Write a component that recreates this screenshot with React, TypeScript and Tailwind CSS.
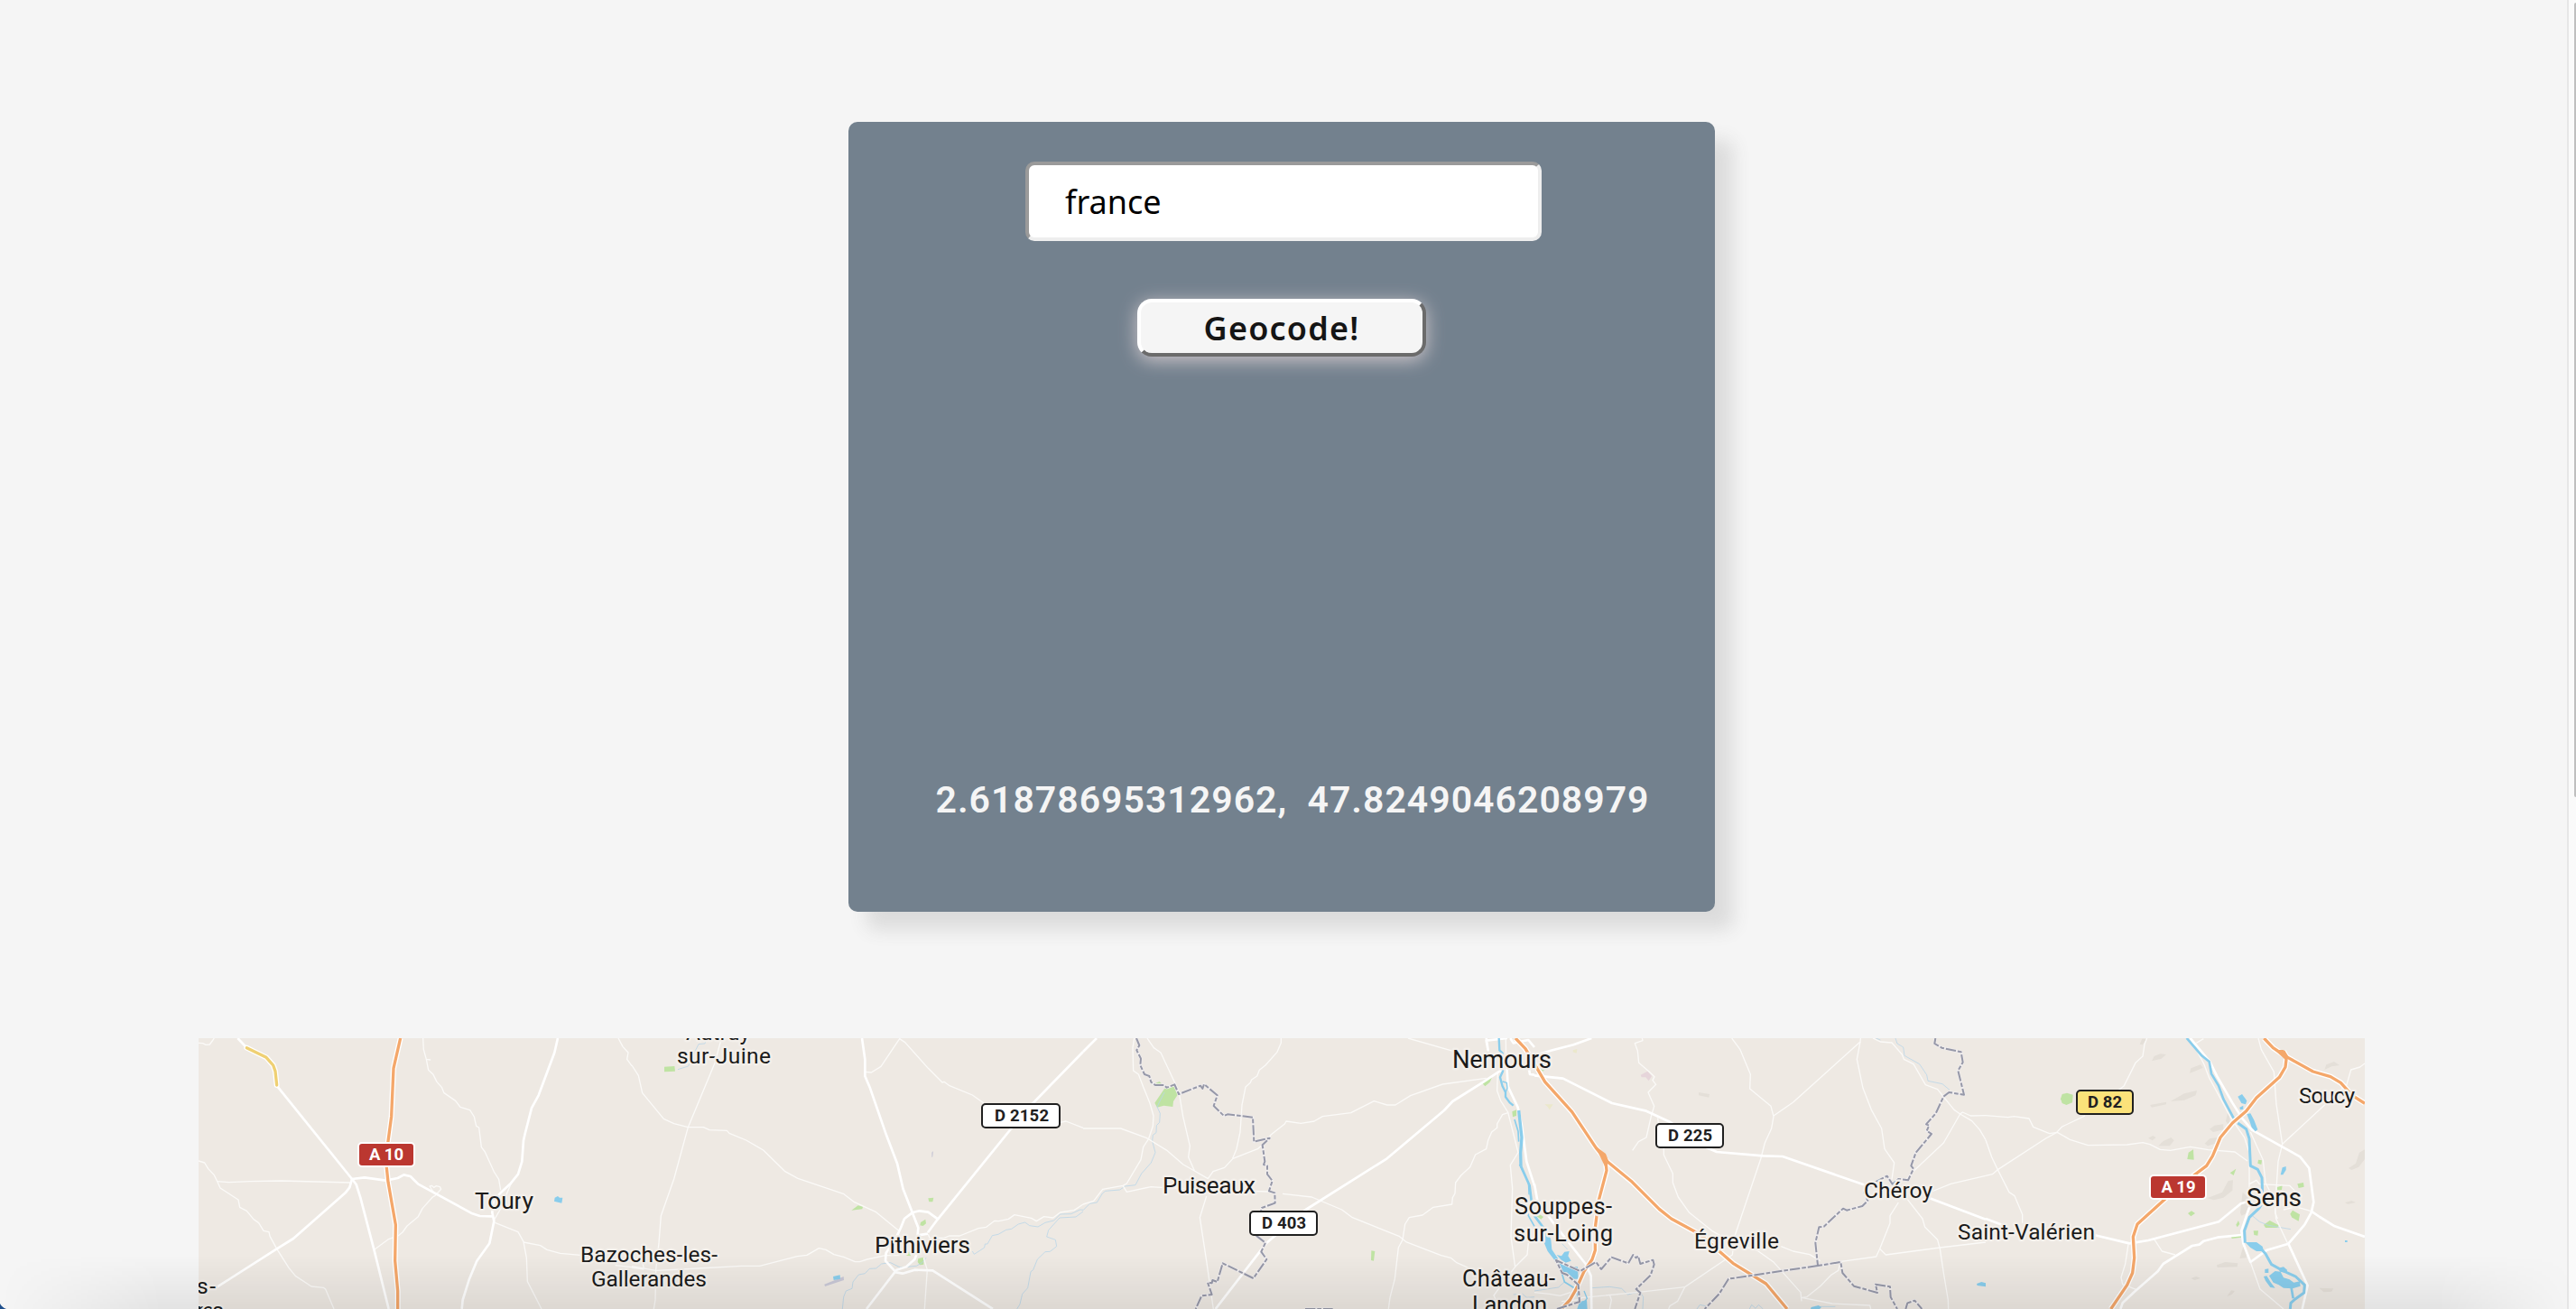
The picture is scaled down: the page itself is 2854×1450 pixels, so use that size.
type Tile = {
  x: number;
  relief?: string[];
  green?: string[];
  lake?: string[];
  thin?: string[];
  stream?: string[];
  major?: string[];
  river?: [string, number][];
  motorway?: string[];
  border?: string[];
};

/* Each tile covers 500x320 map pixels, its geometry is stored at three times that scale. */
const tiles: Tile[] = [
  {
    x: 200,
    lake: ['1244,590 1254,585 1260,590 1270,590 1267,608 1254,605 1242,602'],
    thin: [
      '60,76 74,77 84,82 97,81 112,60',
      '60,468 80,474 92,494 112,515 123,538 132,558 192,597 197,622 220,634 243,662 260,674 276,700 294,704 297,718 320,760 360,823 382,850 435,885 475,889 482,894 510,960',
      '123,536 160,539 230,536 335,534 450,537 565,540',
      '806,60 808,98 817,130 830,132 817,130 824,166 840,181 852,205 868,223 876,242 914,268 930,289 962,299 976,321 983,352 992,357 1000,422 1012,438 1042,504 1058,529 1064,565',
      '1455,60 1470,88 1488,108 1484,130 1500,152',
      '845,578 828,552 835,550 842,556 850,551 862,554 866,562 845,584 838,588 804,626 790,653 753,684 738,705 724,716 690,729 642,764',
      '1100,540 1085,575 1080,600 1040,668',
      '1045,673 1122,704 1140,736 1150,790 1153,868 1200,960',
      '1140,738 1196,749 1218,763 1262,775 1330,781',
      '1445,815 1500,821',
    ],
    major: [
      '190,60 220,92',
      '320,218 570,528 584,546 598,590 645,770 692,960',
      '570,528 562,556 548,574 375,726 320,760 120,888',
      '570,528 612,523 682,533 722,525 742,514 764,519 790,545 970,643 995,651 1035,652',
      '1254,60 1243,108 1190,250 1167,292 1145,378 1140,400 1135,470 1122,512 1098,542 1064,574 1040,600 1036,640 1042,668 1027,742 985,800 960,860 938,930 935,960',
    ],
    motorway: ['731,60 708,160 701,320 682,462 690,538 715,680 713,800 722,900 722,960'],
  },
  {
    x: 700,
    green: [
      '108,155 142,153 144,170 108,172',
      '730,632 752,616 768,620 766,628',
      '958,682 960,672 976,662 978,676 968,684',
      '985,592 1003,590 1000,604 988,604',
      '908,774 928,768 926,784 912,782',
      '952,792 970,788 970,812 958,814 950,804',
    ],
    lake: ['669,852 692,847 693,860 671,864'],
    thin: [
      '0,150 22,184 35,242 106,328 140,344 187,356 238,356 258,365 316,367 324,376 380,399 437,432 508,502 552,526 705,578 740,605 812,638 890,702',
      '298,60 275,145 187,356 140,528 97,650 90,740 80,830 78,930 73,960',
      '0,818 80,832 220,825 365,817 425,817 550,785 582,781 622,758 645,763 672,779 704,787 742,803 758,803 782,795 843,782 890,782',
      '0,822 40,828',
      '35,800 40,826',
      '776,172 796,174 828,154 890,62 908,74 985,160 1032,207 1038,205 1056,218 1132,249 1170,276',
      '890,62 891,60',
      '1425,340 1443,336 1500,358',
      '985,712 990,724 1038,724 1055,717 1090,717 1152,692 1178,688 1206,667 1220,668 1252,661 1272,647 1328,658 1345,668 1370,653 1400,657 1424,639 1470,632 1500,612',
      '970,790 982,830 973,960',
    ],
    stream: [
      '153,164 188,153 198,128 222,80 243,78 245,72',
      '1132,768 1138,778 1172,756 1174,744 1182,744 1198,716 1218,712 1244,697 1262,694 1285,678 1307,672 1322,683 1350,687 1374,673 1403,666 1424,645 1460,644 1490,630 1500,631',
      '1500,636 1476,654 1422,657 1403,678 1385,698 1379,720 1408,730 1412,752 1390,769 1374,770 1348,795 1334,830 1326,836 1316,890 1298,910 1290,944 1280,960',
      '700,960 704,920 712,900 732,892 735,870 754,846 775,842 790,826 812,825 830,810 860,806 892,822 946,817 965,806 978,790',
    ],
    major: [
      '765,60 775,130 775,186 792,226 846,382 882,476 902,562 932,638 952,690 950,715 984,710',
      '1500,105 1310,300 1015,664 984,706',
      '1018,662 985,638 956,634 932,640 906,660 894,690 878,724 845,774 843,800 878,838 900,842 940,830 1000,832 1200,960',
      '950,770 940,795 912,820 880,830 780,960',
    ],
  },
  {
    x: 1200,
    green: [
      '238,275 262,240 270,228 300,218 316,245 300,270 298,288 268,284 246,290',
      '240,210 254,204 262,212 250,220',
      '1324,206 1362,184 1352,206 1336,220',
      '1426,304 1440,298 1440,318 1428,322',
      '958,766 970,768 966,800 957,798',
    ],
    thin: [
      '170,60 165,92 167,168 184,180 200,222 222,276 234,318 232,352 218,394 200,422 192,464 145,543 132,550 65,562 35,601 0,612',
      '0,360 125,360 210,391 280,434 333,480 370,501 415,527 432,503 470,490 498,460 580,428 608,404 625,380 670,345 675,336 724,343 768,336 796,320 890,308 967,269 1010,282 1038,282 1088,251 1195,213 1340,193',
      '213,60 235,92 258,108 318,236 332,320 355,418 350,455 370,500',
      '658,60 658,76 645,106 606,150 586,166 578,186 560,198 556,208 540,222 528,282 522,372 510,428 497,460',
      '132,550 145,571 225,554 270,557 560,568 618,570',
      '663,577 760,588 860,630 895,656 1050,718 1075,738 1190,782 1222,790 1240,805 1285,825',
      '410,585 388,656 410,800 433,960',
      '1412,308 1394,314 1376,345 1376,358 1358,372 1346,400 1340,428 1304,447 1286,488 1256,516 1238,540 1236,576 1228,590 1226,612 1164,622 1128,648 1084,656 1070,678 1062,730 1048,756 1036,860 1020,922 1015,960',
      '1080,60 1230,103',
      '1378,175 1376,235 1388,268 1412,306 1446,440 1420,482 1427,560 1422,720 1436,820 1476,780 1480,740',
      '1436,820 1405,860 1365,915 1372,930',
      '1405,60 1406,160',
    ],
    stream: [
      '270,240 246,288 256,310 254,340 244,350 243,374 232,382 230,402 240,440 226,474 194,510 174,548 140,552 122,564 74,568 64,576 46,606 22,610 0,632',
      '1430,912 1460,910 1475,922 1500,920',
    ],
    major: [
      '45,60 0,105',
      '1400,160 1375,176 1330,206 1228,270 1200,300 1010,460 740,630 610,740 440,960',
      '1408,150 1412,220 1445,290 1458,350 1474,470 1500,550',
      '1340,60 1346,100 1340,68 1410,60',
      '1420,60 1430,76 1480,66 1500,90',
      '1480,150 1485,180 1500,182',
    ],
    river: [
      ['1382,60 1384,100 1394,110 1395,170 1386,190 1394,220 1404,240 1404,255 1418,274 1430,284', 7],
      ['1394,204 1408,208 1410,226 1404,242', 4],
      ['1434,330 1446,370 1448,404', 5],
      ['1448,300 1458,390 1454,440 1455,485', 10],
      ['1455,485 1484,550 1490,600', 8],
      ['1450,480 1480,540 1482,580', 4],
      ['1478,620 1480,650 1500,685', 5],
    ],
    motorway: ['1437,60 1470,95 1500,145'],
    border: [
      '177,60 187,84 178,100 192,128 190,150 204,180 220,186 226,206 240,216 268,216 278,224 304,214 318,246 390,218 397,228 402,213 446,250 434,285 468,318 480,313 564,323 568,404 620,392 596,415 604,470 600,480 612,484 612,512 629,534 618,568 637,574 638,608 594,624 590,640',
      '575,716 606,740 592,770 610,795 566,858 464,808 446,870 430,864 428,874 414,872 428,912 394,916 374,960',
      '738,960 830,960',
    ],
  },
  {
    x: 1700,
    relief: ['546,240 582,246 580,257 546,250'],
    green: [
      '10,640 30,654 22,662 8,652',
      '28,704 46,716 40,724 26,720',
      '14,158 36,164 28,170',
    ],
    lake: [
      '24,690 40,694 55,730 58,762 78,792 70,802 44,768 28,730',
      '74,780 90,784 100,770 116,768 112,784 122,800 104,806 88,796',
      '80,800 106,820 144,820 146,860 130,860 108,838 94,836',
      '150,936 174,930 176,960 142,960',
      '1470,876 1486,870 1500,874 1500,886 1472,882',
      '920,954 944,948 954,954 948,960 918,960',
    ],
    thin: [
      '358,60 360,68 334,77 343,102 347,142 382,172 399,188 393,200 404,214 378,240 398,286 388,320 372,390 346,404 326,433',
      '410,325 412,345',
      '430,420 430,448 460,510 460,540 478,588 515,640 590,700 660,740 740,765 796,805 885,905 888,934',
      '656,60 684,98 718,180 716,228 786,286 795,320 788,360 766,408 752,462 665,720 658,780 500,887 476,934 450,950 446,960',
      '795,318 860,273 1083,72 1084,60',
      '1083,72 1072,130 1092,226 1120,298 1154,360 1164,428 1196,474 1188,530',
      '1125,60 1150,72 1188,75 1222,114 1228,130 1260,146 1300,215 1340,230 1360,255 1395,298 1415,312 1454,335 1480,364 1500,398',
      '1415,312 1423,306 1450,318 1500,317',
      '1415,312 1360,408 1262,500 1235,530',
      '1320,570 1384,544 1500,517',
      '1240,596 1290,660 1298,688 1340,730 1348,760 1360,840 1375,930 1376,960',
      '1210,606 1182,650 1182,675 1148,760 1136,786 1020,802',
      '1148,760 1168,780 1348,756 1500,738',
      '820,752 860,768 915,779 950,800',
      '1018,802 1010,832 985,848 950,884 905,920 888,922 990,942 1115,948 1118,960',
      '500,887 340,905 160,922 140,930 90,935',
      '0,905 50,910 85,916 120,905',
      '250,912 256,930 250,960',
    ],
    stream: [
      '1135,60 1150,66',
      '1200,60 1206,78 1226,90 1230,118 1280,146 1304,182 1308,202 1356,212 1380,232',
      '0,900 80,888 100,870',
      '190,890 250,886 290,892 310,912 350,902 362,920 360,960',
      '540,960 550,946 570,950 580,944',
      '715,960 722,946 735,958 745,946 760,960',
      '950,952 1000,952',
      '72,722 110,762',
    ],
    major: [
      '0,118 60,100 130,82 190,60',
      '0,184 95,194 258,276 372,302 450,338 570,422 606,438 760,451 825,453 1110,552',
      '1310,590 1500,662',
      '0,545 10,600 60,670 170,810 188,850 190,960',
    ],
    river: [
      ['0,650 30,690', 8],
      ['70,798 110,822 150,832', 8],
      ['88,830 100,870 135,892 150,930', 5],
      ['165,900 175,925 150,955', 4],
    ],
    motorway: [
      '0,145 35,205 125,305 205,425 240,468 325,538 415,628 455,660 550,712 660,808 770,876 840,960',
      '236,460 240,500 214,598 202,690 202,765 192,795 165,835 138,895 118,930 90,960',
    ],
    border: [
      '1333,60 1330,78 1354,92 1418,106 1424,140 1408,168 1428,248 1378,240 1360,254 1334,310 1302,346 1312,350 1304,368 1320,378 1268,440 1252,484 1260,494 1242,532 1210,528 1190,545 1172,518 1130,540 1095,572 1108,600 1090,618 1038,632 1026,626 962,686 946,688 934,740 942,816 1018,804 1024,840 1062,884 1140,906 1134,878 1182,886 1184,920 1206,960',
      '942,816 645,860 614,910 566,960',
      '1234,960 1240,940 1264,932 1288,960',
      '75,960 150,936 146,880 108,846 92,840 72,798 152,834 205,804 222,828 256,788 312,808 328,780 338,790 345,784 352,810 394,797 398,812 386,848 338,894 352,906 334,960',
    ],
  },
  {
    x: 2200,
    relief: [
      '512,80 520,62 534,62 522,82',
      '552,136 560,120 580,112 600,114 584,128',
      '678,176 682,160 714,148 722,158 700,168',
      '614,270 660,244 702,234 698,250 660,266',
      '546,282 600,272 600,280 552,290',
      '1126,165 1132,148 1158,138 1176,150 1150,154',
      '574,418 590,402 616,390 626,400 612,418',
      '540,392 556,384 566,390 554,400',
      '744,362 760,350 790,346 790,364 756,372',
      '728,410 744,394 770,390 764,410 738,418',
      '1206,492 1230,476 1242,440 1260,430 1260,462 1240,488 1216,498',
      '736,592 786,572 806,534 822,532 820,566 790,590 758,598',
      '1194,606 1216,600 1230,606 1204,612',
      '846,640 854,572 874,590 872,640 850,650',
      '768,814 796,804 838,808 836,820 770,822',
      '682,858 700,852 714,858 694,864',
      '802,918 816,898 828,900 818,912',
      '1108,890 1156,892 1150,902 1124,904',
      '844,792 856,752 868,768 866,790',
      '798,336 806,300 812,330 808,350',
    ],
    green: [
      '249,262 254,246 270,242 290,248 288,274 268,282 254,276',
      '670,462 674,440 690,430 692,464',
      '812,508 832,494 824,516',
      '672,642 684,634 696,642 682,652',
      '1036,544 1056,540 1058,554 1040,558',
      '1012,644 1020,632 1044,646 1040,668 1018,656',
      '924,680 944,666 974,682 970,690 930,690',
      '890,700 906,700 904,716 892,714',
      '832,680 840,666 844,678 836,688',
      '816,720 850,712 850,722 818,726',
      '968,556 986,550 984,564 970,566',
      '906,464 918,466 916,480 904,476',
    ],
    lake: [
      '838,254 852,246 868,268 864,280 850,276',
      '844,290 856,284 856,296 846,298',
      '868,312 880,310 892,332 904,364 896,370 884,356 878,338',
      '980,514 986,490 998,486 998,498 988,514',
      '862,738 900,738 920,752 924,768 900,768 880,756',
      '928,828 940,826 940,840 928,840',
      '924,852 934,850 948,872 962,890 946,888 930,866',
      '942,850 962,834 980,836 990,856 1010,862 1024,872 1044,868 1046,884 1020,892 990,890 974,880 956,872',
      '972,824 990,820 1002,830 1000,840 978,836',
      '1194,732 1202,732 1202,738 1194,738',
    ],
    thin: [
      '536,60 528,80 522,120 498,142 460,218 440,234',
      '330,318 254,354 235,374 200,393 40,497 22,512 0,517',
      '0,317 74,323 94,320 144,327 158,355 212,377 238,373 280,397 340,416 470,414 522,407 546,413 580,430 614,433 680,421 740,431 828,438 870,468',
      '0,398 20,455 40,497 78,572 96,584 122,646 122,674',
      '906,60 916,98 958,172 966,280 986,412 972,470 966,560 962,640 970,660',
      '986,412 1200,214 1214,165 1244,156 1260,144',
      '680,60 725,145 742,190 780,260 815,325 860,390 876,440 876,560',
      '700,76 724,62',
      '880,372 922,465 930,540 960,600 965,660 1005,745',
      '876,545 900,532 910,545 1010,550 1040,580',
      '990,630 1030,620 1082,635',
      '560,728 586,768 630,780',
      '474,745 464,810 450,855 455,878 500,895',
      '880,804 912,894 990,960',
    ],
    stream: ['886,650 910,670 940,682 1014,695'],
    major: [
      '680,60 745,138 768,185 820,275 852,326 885,365 1045,454 1075,492 1090,605 1082,640 1060,680 1006,743 935,764 880,804 856,742 850,700 870,640 885,600',
      '1006,743 1070,882 1052,960',
      '1082,635 1110,654 1160,685 1260,720',
      '0,660 70,686',
      '360,714 478,742 540,732 775,670 848,610 880,600',
      '850,714 770,722 725,734 710,746 686,750 635,782 590,810 572,835 495,902 455,940 448,960',
    ],
    river: [
      ['668,60 718,118 743,138 750,178 774,218 790,262 824,326', 8],
      ['838,342 866,362 876,394 880,484 904,496 918,524 920,580', 9],
      ['918,610 908,626 876,656 860,700 862,740', 9],
      ['900,744 930,776 950,812 990,834 1030,852 1060,880 1058,906 1030,926 1014,940 1012,960', 9],
      ['1016,890 1022,925', 8],
    ],
    motorway: [
      '925,60 955,92 1000,122 1088,171 1146,188 1180,208 1218,250 1260,277',
      '990,104 1000,122 996,156 976,190 900,258 866,302 820,342 780,390 754,452 734,484 640,555 504,678 490,720 494,790 488,840 470,880 416,960',
    ],
    border: [],
  },
];

const Poly = ({ pts, fill }: { pts?: string[]; fill: string }) => (
  <>{pts?.map((p) => <polygon key={p} points={p} fill={fill} />)}</>
);

const Lines = ({ pts, stroke, width, dash }: { pts?: string[]; stroke: string; width: number; dash?: string }) => (
  <>
    {pts?.map((p) => (
      <polyline key={p} points={p} fill="none" stroke={stroke} strokeWidth={width} strokeDasharray={dash} strokeLinejoin="round" />
    ))}
  </>
);

/* text, left edge, baseline, width, font size */
const labels: [string, number, number, number, number][] = [
  ['Toury', 526, 1339, 65, 26.5],
  ['Pithiviers', 969, 1388, 106, 26.5],
  ['Puiseaux', 1288, 1322, 103, 26.5],
  ['Nemours', 1609, 1182.5, 110, 27.5],
  ['Souppes-', 1678, 1345, 108, 25.5],
  ['sur-Loing', 1677, 1374.5, 110, 25.5],
  ['Château-', 1620, 1425, 103, 25.5],
  ['Landon', 1631, 1454, 83, 25.5],
  ['Égreville', 1877, 1383, 94, 24.5],
  ['Chéroy', 2065, 1327, 76, 24.5],
  ['Saint-Valérien', 2169, 1373, 152, 24.5],
  ['Soucy', 2547, 1222, 62, 24.5],
  ['Sens', 2489, 1336, 61, 28],
  ['Autruy-', 760, 1151.5, 78, 24.5],
  ['sur-Juine', 750, 1178, 104, 24.5],
  ['Bazoches-les-', 643, 1398, 152, 24.5],
  ['Gallerandes', 655, 1425, 128, 24.5],
  ['s-', 218, 1433, 21, 24.5],
  ['ures', 206, 1460, 42, 24.5],
];

/* text, x, y, width, height, kind, text left, text width */
const shields: [string, number, number, number, number, string, number, number][] = [
  ['A 10', 397, 1266, 62, 26, 'red', 409, 38],
  ['A 19', 2382, 1302, 62, 26, 'red', 2394.5, 38],
  ['D 2152', 1088, 1223, 86, 26, 'white', 1102, 60],
  ['D 403', 1385, 1342, 74, 26, 'white', 1398, 49],
  ['D 225', 1835, 1245, 74, 26, 'white', 1848, 49],
  ['D 82', 2301, 1208, 62, 26, 'yellow', 2313, 38],
];

const fills: Record<string, string> = { red: '#bb3730', white: '#ffffff', yellow: '#fbe27a' };

function RouteMap() {
  const each = (draw: (t: Tile) => React.ReactNode) =>
    tiles.map((t) => (
      <g key={t.x} transform={`translate(${t.x} 1130) scale(0.33333)`}>
        {draw(t)}
      </g>
    ));
  return (
    <svg viewBox="220 1150 2400 300" className="block h-[300px] w-[2400px] bg-[#eee9e3]">
      {each((t) => (
        <>
          <Poly pts={t.relief} fill="#e4dfd8" />
          <Poly pts={t.green} fill="#bfe3a3" />
          <Lines pts={t.stream} stroke="#b9d6e8" width={2.4} />
        </>
      ))}
      <g transform="translate(1700 1130) scale(0.33333)">
        <polygon points="353,182 376,170 390,186 380,202 370,190 356,190" fill="#e6d5da" />
        <polygon points="128,100 142,96 140,110 128,106" fill="#ebe8cb" />
        <polygon points="34,280 62,280 50,298 44,288" fill="#ebe8cb" />
      </g>
      <g transform="translate(700 1130) scale(0.33333)">
        <polygon points="640,878 704,852 705,864 642,885" fill="#c9c8d6" />
        <polygon points="997,440 1002,435 1000,454 997,456" fill="#c9c8d6" />
      </g>
      {each((t) => (
        <Lines pts={t.thin} stroke="#fbfaf8" width={4} />
      ))}
      {each((t) => (
        <Lines pts={t.major} stroke="#ffffff" width={8} />
      ))}
      {each((t) => (
        <>
          <Poly pts={t.lake} fill="#89cdec" />
          {t.river?.map(([p, w]) => (
            <polyline key={p} points={p} fill="none" stroke="#89cdec" strokeWidth={w} strokeLinejoin="round" />
          ))}
        </>
      ))}
      {each((t) => (
        <Lines pts={t.motorway} stroke="#ffffff" width={18} />
      ))}
      {each((t) => (
        <Lines pts={t.motorway} stroke="#f4a76a" width={10} />
      ))}
      <g transform="translate(200 1130) scale(0.33333)" fill="none" strokeLinecap="round" strokeLinejoin="round">
        <polyline points="220,92 285,124 308,150 315,170 320,216" stroke="#ffffff" strokeWidth="18" />
        <polyline points="220,92 285,124 308,150 315,170 320,216" stroke="#efd073" strokeWidth="10" />
      </g>
      <g fill="#f4a76a">
        <polygon points="1767,1269 1779,1278 1783,1288 1778,1292" />
        <polygon points="2520,1163 2530,1163 2536,1171 2532,1174" />
      </g>
      {each((t) => (
        <Lines pts={t.border} stroke="#f0edee" width={10} />
      ))}
      {each((t) => (
        <Lines pts={t.border} stroke="#9698a8" width={6} dash="34 6 14 6" />
      ))}
      <g
        fontFamily="Roboto, sans-serif"
        fill="#1b1b1b"
        stroke="#f3efea"
        strokeWidth="5"
        strokeLinejoin="round"
        style={{ paintOrder: 'stroke' }}
      >
        {labels.map(([text, x, y, w, size]) => (
          <text key={text} x={x} y={y} textLength={w} fontSize={size}>
            {text}
          </text>
        ))}
      </g>
      {shields.map(([text, x, y, w, h, kind, tx, tw]) => (
        <g key={text}>
          <rect x={x} y={y} width={w} height={h} rx="4" fill={fills[kind]} stroke={kind === 'red' ? '#ffffff' : '#202020'} strokeWidth="2" />
          <text
            x={tx}
            y={y + 19.3}
            textLength={tw}
            fontFamily="Roboto, sans-serif"
            fontSize="18.5"
            fontWeight="700"
            fill={kind === 'red' ? '#ffffff' : '#202020'}
          >
            {text}
          </text>
        </g>
      ))}
    </svg>
  );
}

export default function App() {
  return (
    <div className="relative flex h-[1450px] w-[2854px] overflow-hidden bg-[#f5f5f5]">
      <main className="flex w-[2840px] flex-col items-center pt-[135px]">
        <section className="flex h-[875px] w-[960px] shrink-0 flex-col items-center rounded-[10px] bg-[#73818e] pt-11 shadow-[20px_20px_20px_#dcdcdc]">
          <input
            type="text"
            defaultValue="france"
            className="ml-1 h-[88px] w-[572px] rounded-[10px] border-4 border-t-[#9a9a9a] border-r-[#eeeeee] border-b-[#eeeeee] border-l-[#9a9a9a] bg-white px-10 font-['Noto_Sans'] text-[36px] text-black outline-none"
          />
          <button className="mt-16 flex h-16 w-80 items-center justify-center rounded-[16px] border-4 border-t-white border-r-[#6b6b6b] border-b-[#6b6b6b] border-l-white bg-[#f5f5f5] pt-0.5 font-['Noto_Sans'] text-[36px] leading-none font-semibold tracking-[1.2px] text-[#151515] shadow-[0_4px_20px_#cfc6ca]">
            Geocode!
          </button>
          <p className="mt-[466px] ml-6 font-[Roboto] text-[41px] leading-[50px] font-semibold tracking-[1px] whitespace-pre text-[#f5f5f5]">
            2.61878695312962,{'  '}47.8249046208979
          </p>
        </section>
        <div className="mt-[140px] shrink-0">
          <RouteMap />
        </div>
      </main>
      <div className="absolute top-0 right-0 h-full w-[10px] border-l-2 border-[#e6e6e6] bg-[#fafafa]">
        <div className="absolute top-[3px] right-0 h-[880px] w-[2px] rounded-l-full bg-[#bfbfbf]" />
      </div>
      <div className="pointer-events-none absolute bottom-0 left-0 h-[60px] w-full bg-linear-to-t from-black/7 to-transparent [mask-image:linear-gradient(to_right,transparent,black_180px,black_2700px,transparent)]" />
      <svg viewBox="0 0 8 8" className="absolute bottom-0 left-0 size-2">
        <path d="M0 2Q2 6 7 8H0Z" fill="#1f4f8c" />
      </svg>
    </div>
  );
}
